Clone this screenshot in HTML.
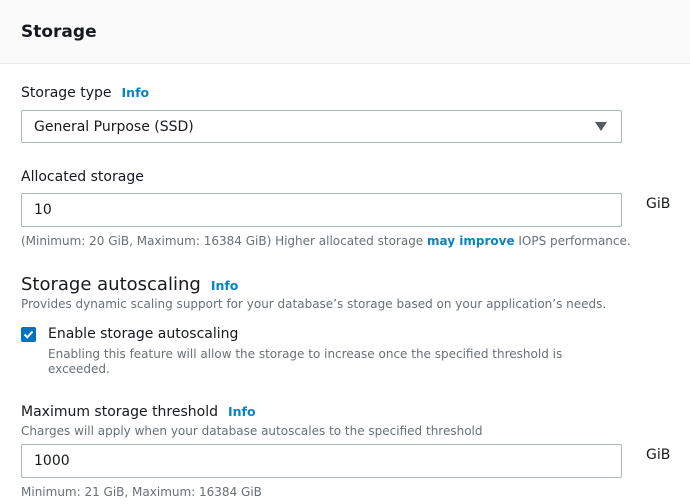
<!DOCTYPE html>
<html><head><style>
*{margin:0;padding:0;box-sizing:border-box}
body{width:690px;height:504px;overflow:hidden;background:#fff;font-family:"DejaVu Sans","Liberation Sans",sans-serif;color:#16191f;position:relative}
.hdr{position:absolute;left:0;top:0;width:690px;height:64px;background:#fafafa;border-bottom:1px solid #eaeded}
.a{position:absolute;white-space:nowrap}
.lbl{font-size:14px}
.info{color:#0a84c1;font-weight:bold;font-size:12.5px;margin-left:10px}
.hint{font-size:12px;color:#687078}
.box{position:absolute;left:21px;width:601px;border:1px solid #aab7b8;border-radius:2px;background:#fff;font-size:14px;padding-left:12px}
</style></head><body>
<div class="hdr"></div>
<div class="a" style="left:21px;top:22px;font-size:17px;font-weight:bold">Storage</div>

<div class="a lbl" style="left:21px;top:85px">Storage type<span class="info">Info</span></div>
<div class="box" style="top:110px;height:33px;line-height:32px">General Purpose (SSD)
<svg style="position:absolute;right:14px;top:11px" width="12" height="9"><path d="M0 0H12L6 9Z" fill="#545b64"/></svg></div>

<div class="a lbl" style="left:21px;top:169px">Allocated storage</div>
<div class="box" style="top:193px;height:34px;line-height:33px">10</div>
<div class="a lbl" style="left:646px;top:196px">GiB</div>
<div class="a hint" style="left:21px;top:234px">(Minimum: 20 GiB, Maximum: 16384 GiB) Higher allocated storage <b style="color:#0a84c1">may improve</b> IOPS performance.</div>

<div class="a" style="left:21px;top:274px;font-size:18px">Storage autoscaling<span class="info">Info</span></div>
<div class="a hint" style="left:21px;top:297px">Provides dynamic scaling support for your database’s storage based on your application’s needs.</div>

<div class="a" style="left:21px;top:327px;width:15px;height:15px;background:#0073bb;border-radius:2px">
<svg width="15" height="15"><path d="M3.5 7.5L6.3 10.3L11.5 4.5" stroke="#fff" stroke-width="2" fill="none"/></svg></div>
<div class="a lbl" style="left:48px;top:326px">Enable storage autoscaling</div>
<div class="a hint" style="left:48px;top:347px;line-height:15px">Enabling this feature will allow the storage to increase once the specified threshold is<br>exceeded.</div>

<div class="a lbl" style="left:21px;top:404px">Maximum storage threshold<span class="info">Info</span></div>
<div class="a hint" style="left:21px;top:424px">Charges will apply when your database autoscales to the specified threshold</div>
<div class="box" style="top:444px;height:34px;line-height:33px">1000</div>
<div class="a lbl" style="left:646px;top:447px">GiB</div>
<div class="a hint" style="left:21px;top:485px">Minimum: 21 GiB, Maximum: 16384 GiB</div>
</body></html>
